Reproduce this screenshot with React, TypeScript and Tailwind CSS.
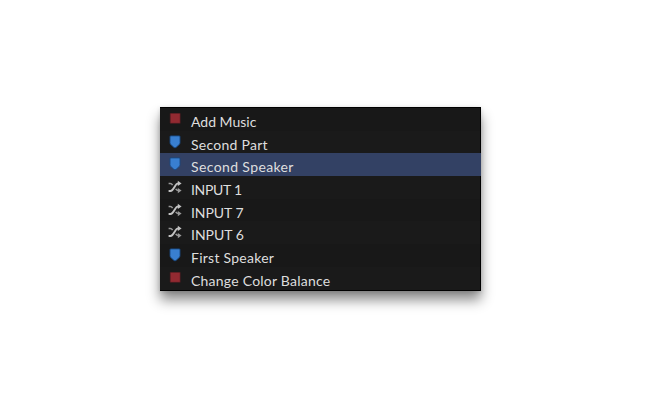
type Kind = "marker" | "shield" | "input";

type Row = { kind: Kind; label: string; tracking: string; selected?: boolean };

// tracking is tuned per label
const rows: Row[] = [
  { kind: "marker", label: "Add Music", tracking: "tracking-normal" },
  { kind: "shield", label: "Second Part", tracking: "tracking-[0.26px]" },
  { kind: "shield", label: "Second Speaker", tracking: "tracking-[0.38px]", selected: true },
  { kind: "input", label: "INPUT 1", tracking: "tracking-[-0.3px]" },
  { kind: "input", label: "INPUT 7", tracking: "tracking-[-0.05px]" },
  { kind: "input", label: "INPUT 6", tracking: "tracking-normal" },
  { kind: "shield", label: "First Speaker", tracking: "tracking-[0.26px]" },
  { kind: "marker", label: "Change Color Balance", tracking: "tracking-[0.23px]" },
];

function RowIcon({ kind }: { kind: Kind }) {
  if (kind === "marker") {
    return (
      <svg width="14" height="14" viewBox="0 0 14 14">
        <rect x="1.8" y="0.9" width="10.8" height="10.8" rx="0.8" fill="#4d1c20" />
        <rect x="2.6" y="1.7" width="9.2" height="9.2" fill="#922a31" />
      </svg>
    );
  }
  if (kind === "shield") {
    return (
      <svg width="14" height="14" viewBox="0 0 14 14">
        <path
          d="M2 1.6Q2 .9 2.8.9H11.2Q12 .9 12 1.6V7.6Q12 8.6 11.3 9.4L8.2 12.3Q7 13.4 5.8 12.3L2.7 9.4Q2 8.6 2 7.6Z"
          fill="#397fd0"
          stroke="#184780"
          strokeWidth="0.9"
        />
      </svg>
    );
  }
  return (
    <svg width="14" height="14" viewBox="0 0 14 14">
      <g fill="none" stroke="#c2c2c2" strokeWidth="1.5">
        <path d="M.6 11H2.5C6.1 11 6.6 3.4 10.3 3.4" strokeWidth="1.9" />
        <path d="M.6 3.4H2.2Q3.6 3.4 4.6 5.1" stroke="#9a9a9a" />
        <path d="M7.7 8.8Q8.8 10.6 10.5 10.6" stroke="#9a9a9a" />
      </g>
      <path d="M9.8 .8L13.6 3.4L9.8 6Z" fill="#c2c2c2" />
      <path d="M9.8 8L13.6 10.6L9.8 13.2Z" fill="#9a9a9a" />
    </svg>
  );
}

export default function App() {
  return (
    <main className="h-[401px] w-[648px] overflow-hidden bg-white pt-[107px] pl-[160px]">
      <div className="h-[183.5px] w-[321px] border-t border-black bg-[#181818] shadow-[0_9px_12px_rgba(0,0,0,0.46),0_1px_4px_rgba(0,0,0,0.15)]">
        <ul className="flex h-full flex-col">
          {rows.map((row) => (
            <li
              key={row.label}
              className={
                row.selected
                  ? "flex min-h-0 flex-1 items-center bg-[#334164]"
                  : "flex min-h-0 flex-1 items-center border-r border-black last:border-b odd:bg-[#181818] even:bg-[#1a1a1a]"
              }
            >
              <span className="mb-[1px] ml-2 w-[23px] shrink-0">
                <RowIcon kind={row.kind} />
              </span>
              <span
                className={`mt-[5px] whitespace-nowrap font-[Lato,'Open_Sans',sans-serif] text-[14px] leading-[18px] text-[#dedede] ${row.tracking}`}
              >
                {row.label}
              </span>
            </li>
          ))}
        </ul>
      </div>
    </main>
  );
}
